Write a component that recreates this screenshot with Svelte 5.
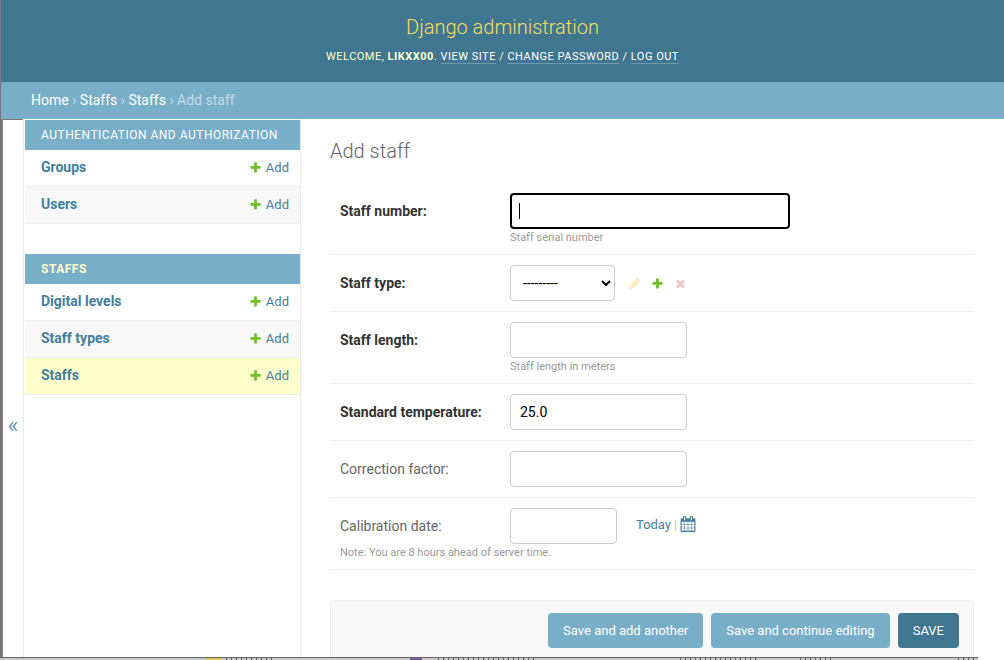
<script>
  const apps = [
    {
      name: 'Authentication and Authorization',
      models: [
        { name: 'Groups' },
        { name: 'Users' }
      ]
    },
    {
      name: 'Staffs',
      current: true,
      models: [
        { name: 'Digital levels' },
        { name: 'Staff types' },
        { name: 'Staffs', current: true }
      ]
    }
  ];
</script>

{#snippet addIcon()}
  <svg class="icon" viewBox="0 0 1792 1792"><path fill="#70bf2b" d="M1600 796v192q0 40-28 68t-68 28h-416v416q0 40-28 68t-68 28h-192q-40 0-68-28t-28-68v-416h-416q-40 0-68-28t-28-68v-192q0-40 28-68t68-28h416v-416q0-40 28-68t68-28h192q40 0 68 28t28 68v416h416q40 0 68 28t28 68z"/></svg>
{/snippet}

<div class="window">
  <header class="header">
    <h1>Django administration</h1>
    <div class="user-tools">
      Welcome, <strong>likxx00</strong>.
      <a href="#site">View site</a> /
      <a href="#password">Change password</a> /
      <a href="#logout">Log out</a>
    </div>
  </header>

  <div class="breadcrumbs">
    <a href="#home">Home</a> › <a href="#staffs">Staffs</a> › <a href="#staff">Staffs</a> › Add staff
  </div>

  <div class="body">
    <button class="toggle">«</button>

    <nav class="sidebar">
      {#each apps as app}
        <div class="app">
          <div class="caption" class:current={app.current}>{app.name}</div>
          {#each app.models as model, i}
            <div class="model" class:alt={i % 2 === 1} class:current={model.current}>
              <a class="model-name" href="#model">{model.name}</a>
              <a class="addlink" href="#add">{@render addIcon()}Add</a>
            </div>
          {/each}
        </div>
      {/each}
    </nav>

    <main class="content">
      <h2>Add staff</h2>

      <form class="form">
        <div class="row">
          <div class="field">
            <label class="required" for="num">Staff number:</label>
            <div class="control">
              <input id="num" class="wide focused" type="text" />
              <span class="caret"></span>
            </div>
          </div>
          <div class="help">Staff serial number</div>
        </div>

        <div class="row">
          <div class="field">
            <label class="required" for="type">Staff type:</label>
            <div class="control">
              <select id="type"><option>---------</option></select>
              <span class="related">
                <svg class="icon faded" viewBox="0 0 1792 1792"><path fill="#efb80b" d="M491 1536l91-91-235-235-91 91v107h128v128h107zm523-928q0-22-22-22-10 0-17 7l-542 542q-7 7-7 17 0 22 22 22 10 0 17-7l542-542q7-7 7-17zm-54-192l416 416-832 832h-416v-416zm683 96q0 53-37 90l-166 166-416-416 166-165q36-38 90-38 53 0 91 38l235 234q37 39 37 91z"/></svg>
                {@render addIcon()}
                <svg class="icon faded" viewBox="0 0 1792 1792"><path fill="#dd4646" d="M1490 1322q0 40-28 68l-136 136q-28 28-68 28t-68-28l-294-294-294 294q-28 28-68 28t-68-28l-136-136q-28-28-28-68t28-68l294-294-294-294q-28-28-28-68t28-68l136-136q28-28 68-28t68 28l294 294 294-294q28-28 68-28t68 28l136 136q28 28 28 68t-28 68l-294 294 294 294q28 28 28 68z"/></svg>
              </span>
            </div>
          </div>
        </div>

        <div class="row">
          <div class="field">
            <label class="required" for="len">Staff length:</label>
            <div class="control"><input id="len" type="text" /></div>
          </div>
          <div class="help">Staff length in meters</div>
        </div>

        <div class="row">
          <div class="field">
            <label class="required" for="temp">Standard temperature:</label>
            <div class="control"><input id="temp" type="text" value="25.0" /></div>
          </div>
        </div>

        <div class="row">
          <div class="field">
            <label for="corr">Correction factor:</label>
            <div class="control"><input id="corr" type="text" /></div>
          </div>
        </div>

        <div class="row">
          <div class="field">
            <label for="date">Calibration date:</label>
            <div class="control">
              <input id="date" class="date" type="text" />
              <span class="shortcuts">
                <a href="#today">Today</a><span class="sep">|</span><svg class="calendar" viewBox="0 0 1792 1792"><path fill="#447e9b" d="M192 1664h288v-288h-288v288zm352 0h320v-288h-320v288zm-352-352h288v-320h-288v320zm352 0h320v-320h-320v320zm-352-384h288v-288h-288v288zm736 736h320v-288h-320v288zm-384-736h320v-288h-320v288zm768 736h288v-288h-288v288zm-384-352h320v-320h-320v320zm-352-864v-288q0-13-9.500-22.500t-22.500-9.500h-64q-13 0-22.500 9.500t-9.500 22.500v288q0 13 9.500 22.500t22.500 9.500h64q13 0 22.500-9.500t9.500-22.500zm736 864h288v-320h-288v320zm-384-384h320v-288h-320v288zm384 0h288v-288h-288v288zm32-480v-288q0-13-9.500-22.500t-22.500-9.500h-64q-13 0-22.500 9.500t-9.500 22.500v288q0 13 9.500 22.500t22.500 9.500h64q13 0 22.500-9.500t9.500-22.500zm384-64v1280q0 52-38 90t-90 38h-1408q-52 0-90-38t-38-90v-1280q0-52 38-90t90-38h128v-96q0-66 47-113t113-47h64q66 0 113 47t47 113v96h384v-96q0-66 47-113t113-47h64q66 0 113 47t47 113v96h128q52 0 90 38t38 90z"/></svg>
              </span>
            </div>
          </div>
          <div class="note">Note: You are 8 hours ahead of server time.</div>
        </div>

        <div class="submit-row">
          <button type="button" class="btn">Save and add another</button>
          <button type="button" class="btn">Save and continue editing</button>
          <button type="button" class="btn default">SAVE</button>
        </div>
      </form>
    </main>
  </div>
</div>

<!-- sliver of the window underneath, only the tops of its row show -->
<div class="behind">
  <span class="chip folder"></span>
  <span class="ticks name"></span>
  <span class="chip thumb"></span>
  <span class="ticks name2"></span>
  <span class="ticks when"></span>
  <span class="ticks kind"></span>
  <span class="ticks size"></span>
</div>

<style>
  :global(body) {
    margin: 0;
    background: #fff;
    overflow: hidden;
  }

  .window {
    width: 1003px;
    height: 657px;
    overflow: hidden;
    display: flex;
    flex-direction: column;
    border-left: 1px solid #777;
    font-family: Roboto, "Liberation Sans", sans-serif;
    font-size: 14px;
    color: #333;
  }

  a {
    text-decoration: none;
    color: #447e9b;
  }

  .header {
    height: 82px;
    flex: none;
    box-sizing: border-box;
    padding-top: 15px;
    background: #417690;
    text-align: center;
    color: #ffc;
  }

  h1 {
    margin: 0 0 10px;
    font-size: 20px;
    line-height: 24px;
    font-weight: 300;
    color: #f5dd5d;
  }

  .user-tools {
    font-size: 11px;
    line-height: 16px;
    letter-spacing: 0.5px;
    text-transform: uppercase;
  }
  .user-tools a {
    color: #fff;
    border-bottom: 1px solid rgba(255, 255, 255, 0.25);
  }

  .breadcrumbs {
    height: 37px;
    flex: none;
    box-sizing: border-box;
    padding: 10px 30px;
    line-height: 17px;
    background: #79aec8;
    color: #c4dce8;
  }
  .breadcrumbs a {
    color: #fff;
  }

  .body {
    flex: 1;
    min-height: 0;
    display: flex;
    background: #fff;
    border-left: 2px solid #808080;
  }

  .toggle {
    flex: none;
    width: 20px;
    padding: 72px 0 0;
    border: none;
    border-top: 1px solid #777;
    border-right: 1px solid #eaeaea;
    background: #fff;
    color: #447e9b;
    font-family: inherit;
    font-size: 24px;
    font-weight: 300;
    box-sizing: content-box;
  }

  .sidebar {
    flex: none;
    width: 275px;
    padding: 1px 0 0 1px;
    margin-left: -1px;
    border-left: 1px solid #eaeaea;
    border-right: 1px solid #eaeaea;
  }

  .app {
    margin-bottom: 30px;
  }

  .caption {
    height: 30px;
    box-sizing: border-box;
    padding: 8px 16px 0;
    font-size: 12px;
    line-height: 14px;
    letter-spacing: 0.5px;
    text-transform: uppercase;
    color: #fff;
    background: #79aec8;
  }
  .caption.current {
    font-weight: 700;
    color: #ffc;
  }

  .model {
    height: 37px;
    box-sizing: border-box;
    padding: 0 11px 2px 16px;
    display: flex;
    align-items: center;
    justify-content: space-between;
    background: #fff;
    border-bottom: 1px solid #eee;
  }
  .model.alt {
    background: #f8f8f8;
  }
  .model.current {
    background: #ffc;
  }

  .model-name {
    font-weight: 700;
    font-size: 14px;
    color: #447e9b;
  }

  .addlink {
    display: flex;
    align-items: center;
    gap: 4px;
    font-size: 13px;
    color: #447e9b;
  }

  .icon {
    width: 13px;
    height: 13px;
    display: block;
    flex: none;
  }
  .icon.faded {
    opacity: 0.3;
  }

  .content {
    flex: 1;
    min-width: 0;
    padding: 1px 30px 0 29px;
  }

  h2 {
    margin: 0;
    height: 63px;
    box-sizing: border-box;
    padding-top: 19px;
    font-size: 20px;
    line-height: 24px;
    font-weight: 300;
    color: #666;
  }

  .row {
    padding: 10px;
    border-bottom: 1px solid #eee;
  }

  .field {
    display: flex;
    align-items: center;
    min-height: 36px;
  }

  label {
    width: 170px;
    flex: none;
    font-size: 14px;
    color: #666;
  }
  label.required {
    font-weight: 700;
    color: #333;
  }

  .control {
    display: flex;
    align-items: center;
    position: relative;
  }

  input,
  select {
    height: 36px;
    box-sizing: border-box;
    border: 1px solid #ccc;
    border-radius: 4px;
    background: #fff;
    font-family: Roboto, "Liberation Sans", sans-serif;
    font-size: 14px;
    color: #000;
    outline: none;
  }

  input {
    width: 177px;
    padding: 0 9px;
  }
  input.wide {
    width: 280px;
  }
  input.date {
    width: 107px;
  }
  input.focused {
    border: 2px solid #000;
  }

  .caret {
    position: absolute;
    left: 9px;
    top: 10px;
    width: 1px;
    height: 16px;
    background: #000;
  }

  select {
    width: 105px;
    padding: 0 8px;
  }

  .related {
    display: flex;
    align-items: center;
    gap: 10px;
    margin-left: 13px;
  }

  .shortcuts {
    display: flex;
    align-items: center;
    margin-left: 19px;
    margin-top: -4px;
    font-size: 13px;
  }
  .sep {
    margin: 0 3px;
    color: #ddb8a8;
  }
  .calendar {
    width: 16px;
    height: 16px;
    display: block;
  }

  .help,
  .note {
    padding-top: 2px;
    font-size: 11px;
    line-height: 13px;
    color: #999;
  }
  .help {
    margin-left: 170px;
  }

  .submit-row {
    margin-top: 30px;
    padding: 12px 14px;
    display: flex;
    justify-content: flex-end;
    gap: 8px;
    background: #f8f8f8;
    border: 1px solid #eee;
    border-radius: 4px;
  }

  .btn {
    height: 35px;
    padding: 0 15px;
    border: none;
    border-radius: 4px;
    background: #79aec8;
    color: #fff;
    font-family: inherit;
    font-size: 13px;
  }
  .btn.default {
    background: #417690;
  }

  .behind {
    width: 978px;
    height: 3px;
    box-sizing: border-box;
    border-top: 1px solid #666;
    overflow: hidden;
    display: flex;
    background: #c9c9c9;
  }

  .chip,
  .ticks {
    flex: none;
    height: 2px;
  }
  .folder {
    width: 17px;
    margin-left: 205px;
    background: #e3c261;
  }
  .thumb {
    width: 12px;
    margin-left: 4px;
    background: #7a5aa8;
  }
  .ticks {
    background: repeating-linear-gradient(90deg, #555 0 1px, transparent 1px 5px);
  }
  .name {
    width: 50px;
    margin-left: 4px;
    margin-right: 130px;
  }
  .name2 {
    width: 100px;
    margin-left: 16px;
  }
  .when {
    width: 78px;
    margin-left: 142px;
  }
  .kind {
    width: 34px;
    margin-left: 42px;
  }
  .size {
    width: 26px;
    margin-left: 124px;
  }
</style>
